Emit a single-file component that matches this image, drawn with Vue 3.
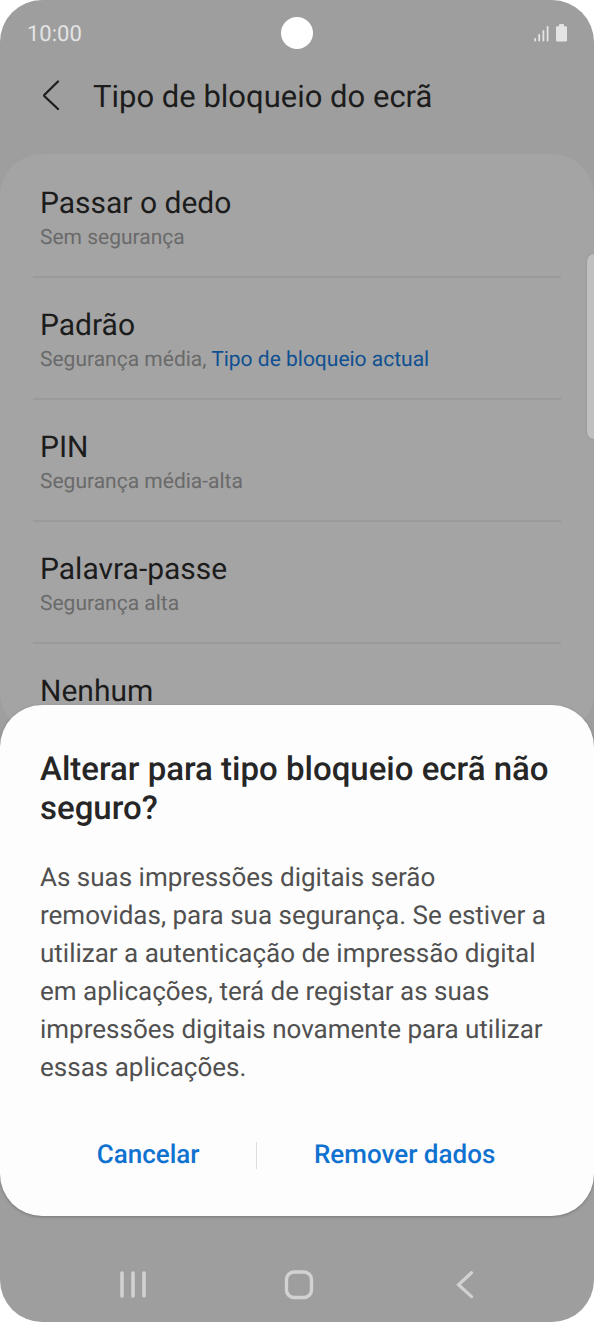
<script setup>
const options = [
  { name: 'Passar o dedo', detail: 'Sem segurança' },
  { name: 'Padrão', detail: 'Segurança média,', current: 'Tipo de bloqueio actual' },
  { name: 'PIN', detail: 'Segurança média-alta' },
  { name: 'Palavra-passe', detail: 'Segurança alta' },
  { name: 'Nenhum' },
]
</script>

<template>
  <div class="phone">
    <div class="status">
      <time class="clock">10:00</time>
      <span class="camera"></span>
      <svg class="indicators" width="34" height="20" viewBox="0 0 34 20" aria-hidden="true">
        <path
          d="M2.200 16v1.500M6.200 12v5.500M10.400 8v9.500M14.600 4v13.500"
          fill="none" stroke="#e4e4e4" stroke-width="1.800" stroke-linecap="round"
        />
        <path
          d="M26 3.200V2.200Q26 1 27 1H30Q31 1 31 2.200V3.200H33Q34 3.200 34 4.200V17.500Q34 18.500 33 18.500H24Q23 18.500 23 17.500V4.200Q23 3.200 24 3.200Z"
          fill="#e4e4e4"
        />
      </svg>
    </div>

    <header class="header">
      <button class="back" type="button" aria-label="Voltar">
        <svg width="20" height="32" viewBox="0 0 20 32">
          <path
            d="M16 1.500 2.500 14.700Q1.800 15.500 2.500 16.300L16 29"
            fill="none" stroke="#1c1c1c" stroke-width="2.200" stroke-linecap="round"
          />
        </svg>
      </button>
      <h1>Tipo de bloqueio do ecrã</h1>
    </header>

    <ul class="options">
      <li v-for="option in options" :key="option.name">
        <button class="option" type="button">
          <span class="name">{{ option.name }}</span>
          <span v-if="option.detail" class="detail">
            {{ option.detail }}
            <span v-if="option.current" class="current">{{ option.current }}</span>
          </span>
        </button>
      </li>
    </ul>

    <span class="edge-handle"></span>

    <section class="dialog" role="dialog" aria-modal="true" aria-labelledby="dialog-title">
      <h2 id="dialog-title">Alterar para tipo bloqueio ecrã não seguro?</h2>
      <p>
        As suas impressões digitais serão removidas, para sua segurança. Se estiver a utilizar a
        autenticação de impressão digital em aplicações, terá de registar as suas impressões
        digitais novamente para utilizar essas aplicações.
      </p>
      <div class="actions">
        <button type="button">Cancelar</button>
        <span class="separator"></span>
        <button type="button">Remover dados</button>
      </div>
    </section>

    <nav class="navbar">
      <button type="button" aria-label="Recentes">
        <svg width="30" height="30" viewBox="0 0 30 30">
          <path
            d="M4 3v23M15 3v23M26 3v23"
            fill="none" stroke="#d2d2d2" stroke-width="3.600" stroke-linecap="round"
          />
        </svg>
      </button>
      <button type="button" aria-label="Início">
        <svg width="30" height="30" viewBox="0 0 30 30">
          <rect
            x="2.500" y="2" width="25" height="25.500" rx="7.500"
            fill="none" stroke="#d2d2d2" stroke-width="3.400"
          />
        </svg>
      </button>
      <button type="button" aria-label="Retroceder">
        <svg width="30" height="30" viewBox="0 0 30 30">
          <path d="M21.500 2.800 8.500 14.700 21.500 26.600" fill="none" stroke="#d2d2d2" stroke-width="3.200" stroke-linecap="round" />
        </svg>
      </button>
    </nav>
  </div>
</template>

<style>
body {
  background: #fff;
}
</style>

<style scoped>
.phone {
  position: relative;
  display: flex;
  flex-direction: column;
  min-height: 100vh;
  overflow: hidden;
  border-radius: 42px;
  background: #9e9e9e;
  color: #1c1c1c;
  font-family: Roboto, "Liberation Sans", sans-serif;
  text-rendering: geometricPrecision;
}

button {
  margin: 0;
  padding: 0;
  border: 0;
  background: none;
  color: inherit;
  font: inherit;
  text-rendering: inherit;
  cursor: pointer;
}

svg {
  display: block;
}

.status {
  display: grid;
  grid-template-columns: 1fr auto 1fr;
  align-items: center;
  height: 66px;
  padding: 0 27px;
}

.clock {
  padding-top: 3px;
  color: #e4e4e4;
  font-size: 22px;
}

.camera {
  width: 32px;
  height: 32px;
  border-radius: 50%;
  background: #fff;
}

.indicators {
  justify-self: end;
}

.header {
  display: flex;
  align-items: center;
  gap: 31px;
  height: 60px;
  margin-bottom: 28px;
  padding: 0 42px;
}

h1 {
  margin: 0;
  padding-top: 2px;
  font-size: 31px;
  font-weight: 400;
  line-height: 40px;
}

.options {
  margin: 0;
  padding: 2px 33px 0;
  border-radius: 42px;
  background: #a4a4a4;
  list-style: none;
}

.options li + li {
  border-top: 2px solid #9a9a9a;
}

.option {
  display: block;
  width: 100%;
  padding: 28px 7px 23px;
  text-align: left;
}

.name,
.detail {
  display: block;
}

.name {
  font-size: 30px;
  line-height: 40px;
}

.detail {
  color: #6a6a6a;
  font-size: 21px;
  line-height: 29px;
}

.current {
  color: #0f5092;
}

.edge-handle {
  position: absolute;
  top: 254px;
  right: 0;
  width: 7px;
  height: 185px;
  border-radius: 7px 0 0 7px;
  background: #c0c0c0;
  box-shadow: 0 0 2px #888;
}

.dialog {
  position: absolute;
  right: 0;
  bottom: 106px;
  left: 0;
  padding: 45px 40px 33px;
  border-radius: 42px;
  background: #fdfdfd;
  box-shadow: 0 1px 3px #777;
}

h2 {
  margin: 0 0 31px;
  color: #262626;
  font-size: 33px;
  font-weight: 500;
  line-height: 39px;
}

p {
  margin: 0;
  color: #505050;
  font-size: 26px;
  line-height: 38px;
}

.actions {
  display: flex;
  align-items: center;
  margin-top: 40px;
  padding-right: 2px;
}

.actions button {
  flex: 1 1 auto;
  height: 56px;
  color: #0f72d0;
  font-size: 26px;
  font-weight: 500;
}

.separator {
  width: 1px;
  height: 27px;
  background: #dedede;
}

.navbar {
  display: grid;
  grid-template-columns: repeat(3, 1fr);
  height: 74px;
  margin-top: auto;
  padding: 0 46px 0 50px;
}

.navbar button {
  display: grid;
  place-items: center;
}
</style>
